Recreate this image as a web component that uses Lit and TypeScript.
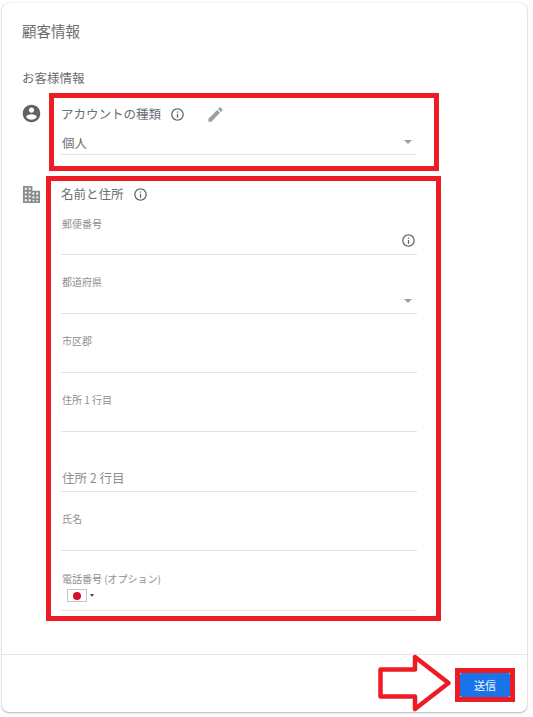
import { LitElement, html, css, svg } from "lit";
import { customElement } from "lit/decorators.js";

const info = (size: number) => html`<svg class="info" width=${size} height=${size} viewBox="0 0 24 24" fill="#5f6368"><path d="M11 7h2v2h-2zm0 4h2v6h-2zm1-9C6.48 2 2 6.48 2 12s4.48 10 10 10 10-4.48 10-10S17.52 2 12 2zm0 18c-4.41 0-8-3.59-8-8s3.59-8 8-8 8 3.59 8 8-3.59 8-8 8z"/></svg>`;
const caret = html`<svg class="caret" width="8" height="4" viewBox="0 0 10 5" fill="#9aa0a6"><path d="M0 0h10L5 5z"/></svg>`;

@customElement("app-root")
export class AppRoot extends LitElement {
  static styles = css`
    :host { display: block; position: relative; width: 533px; height: 717px; background: #fff; overflow: hidden;
      font-family: "Noto Sans CJK JP", "Noto Sans", sans-serif; color: #6a6e73; }
    .card { box-sizing: border-box; margin: 3px 6px 0 2px; height: 709px; border-radius: 7px; background: #fff;
      box-shadow: 0 1px 2px rgba(60,64,67,.35), 0 0 2px rgba(60,64,67,.2); display: flex; flex-direction: column; }
    .main { flex: 1; padding: 0 20px 0 20px; display: flex; flex-direction: column; }
    h1 { margin: 17px 0 0; font-size: 14.5px; line-height: 22px; font-weight: 400; }
    h2 { margin: 27px 0 0; font-size: 12.5px; line-height: 18px; font-weight: 400; }
    .row { display: flex; gap: 19px; }
    .row.acct { margin-top: 11px; height: 79px; }
    .row.addr { margin-top: 3px; }
    .ico { flex: none; display: block; }
    .ico.person { width: 21px; height: 21px; margin: 5px 0 0 -1px; }
    .ico.building { width: 19px; height: 19px; margin: 5px 1px 0 0; }
    .col { width: 356px; display: flex; flex-direction: column; }
    .head { display: flex; align-items: center; font-size: 12.5px; line-height: 20px; height: 20px; }
    .acct .head { margin-top: 6px; }
    .addr .head { margin-top: 4px; }
    .head .info { margin-left: 9px; }
    .pencil { margin-left: 21px; }
    .select { margin-top: 10px; height: 21px; box-sizing: border-box; border-bottom: 1px solid #e4e4e4;
      display: flex; align-items: center; justify-content: space-between; font-size: 12.5px; padding: 0 5px 4px 1px; }
    .field { box-sizing: border-box; height: 59px; border-bottom: 1px solid #e2e3e6; position: relative;
      display: flex; flex-direction: column; }
    .field.first { height: 51px; }
    .field label { font-size: 10px; line-height: 14px; color: #8c9094; padding-left: 1px; padding-top: 20px; }
    .field.first label { padding-top: 13px; }
    .field .end { position: absolute; right: 1px; bottom: 6px; display: flex; }
    .field .end.car { right: 5px; bottom: 10px; }
    .field.ph { height: 60px; }
    .field.ph label { font-size: 12.5px; line-height: 20px; padding-top: 36px; color: #8c9094; }
    .field.phone { height: 60px; }
    .field.phone label { padding-top: 21px; }
    .flag-line { display: flex; align-items: center; gap: 3px; padding: 3px 0 0 6px; }
    .flag { box-sizing: border-box; width: 20px; height: 13px; border: 1px solid #c4c4c4; background: #fff;
      display: flex; align-items: center; justify-content: center; }
    .flag span { width: 8px; height: 8px; border-radius: 50%; background: #d3112d; }
    .mini { width: 0; height: 0; border-left: 2px solid transparent; border-right: 2px solid transparent; border-top: 3px solid #3c4a66; }
    footer { flex: none; height: 58px; border-top: 1px solid #e6e6e6; box-sizing: border-box;
      display: flex; justify-content: flex-end; align-items: flex-start; padding: 18px 17px 0 0; }
    button { width: 50px; height: 24px; border: 0; border-radius: 2px; background: #1a73e8; color: #dbe9fc;
      font: 500 11px/24px "Noto Sans CJK JP", sans-serif; padding: 0; }
    .box { position: absolute; box-sizing: border-box; border: 5px solid #ed1c24; pointer-events: none; }
    .b1 { left: 49px; top: 93px; width: 390px; height: 78px; }
    .b2 { left: 46px; top: 176px; width: 395px; height: 445px; }
    .b3 { left: 455px; top: 668px; width: 60px; height: 34px; }
    .arrow { position: absolute; left: 375px; top: 650px; pointer-events: none; }
  `;

  private field(label: string, extra: unknown = null, cls = "") {
    return html`<div class="field ${cls}"><label>${label}</label>${extra}</div>`;
  }

  render() {
    return html`
      <div class="card">
        <div class="main">
          <h1>顧客情報</h1>
          <h2>お客様情報</h2>
          <div class="row acct">
            <svg class="ico person" viewBox="0 0 24 24" fill="#5f6368"><path d="M12 2C6.48 2 2 6.48 2 12s4.48 10 10 10 10-4.48 10-10S17.52 2 12 2zm0 3c1.66 0 3 1.34 3 3s-1.34 3-3 3-3-1.34-3-3 1.34-3 3-3zm0 14.2c-2.5 0-4.71-1.28-6-3.22.03-1.99 4-3.08 6-3.08 1.99 0 5.97 1.09 6 3.08-1.29 1.94-3.5 3.22-6 3.22z"/></svg>
            <div class="col">
              <div class="head">アカウントの種類 ${info(15)}
                <svg class="pencil" width="19" height="19" viewBox="0 0 24 24" fill="#9aa0a6"><path d="M3 17.25V21h3.75L17.81 9.94l-3.75-3.75L3 17.25zM20.71 7.04a1 1 0 0 0 0-1.41l-2.34-2.34a1 1 0 0 0-1.41 0l-1.83 1.83 3.75 3.75 1.83-1.83z"/></svg>
              </div>
              <div class="select"><span>個人</span>${caret}</div>
            </div>
          </div>
          <div class="row addr">
            <svg class="ico building" viewBox="0 0 20 20" fill="#8a8e92"><path fill-rule="evenodd" d="M1 1h10v5h8v13H1zM3 3v2h2V3zm4 0v2h2V3zM3 7v2h2V7zm4 0v2h2V7zm4 1v2h2V8zm4 0v2h2V8zM3 11v2h2v-2zm4 0v2h2v-2zm4 1v2h2v-2zm4 0v2h2v-2zM3 15v2h2v-2zm4 0v2h2v-2zm4 1v1h2v-1zm4 0v1h2v-1z"/></svg>
            <div class="col">
              <div class="head">名前と住所 ${info(15)}</div>
              ${this.field("郵便番号", html`<span class="end">${info(15)}</span>`, "first")}
              ${this.field("都道府県", html`<span class="end car">${caret}</span>`)}
              ${this.field("市区郡")}
              ${this.field("住所 1 行目")}
              ${this.field("住所 2 行目", null, "ph")}
              ${this.field("氏名")}
              ${this.field("電話番号 (オプション)", html`<div class="flag-line"><div class="flag"><span></span></div><i class="mini"></i></div>`, "phone")}
            </div>
          </div>
        </div>
        <footer><button>送信</button></footer>
      </div>
      <div class="box b1"></div>
      <div class="box b2"></div>
      <div class="box b3"></div>
      <svg class="arrow" width="80" height="66" viewBox="0 0 80 66" fill="none" stroke="#ed1c24" stroke-width="4.5" stroke-linejoin="round">
        ${svg`<path d="M5.5 19.5H40V7L73.5 33L40 59V46.5H5.5z"/>`}
      </svg>
    `;
  }
}
